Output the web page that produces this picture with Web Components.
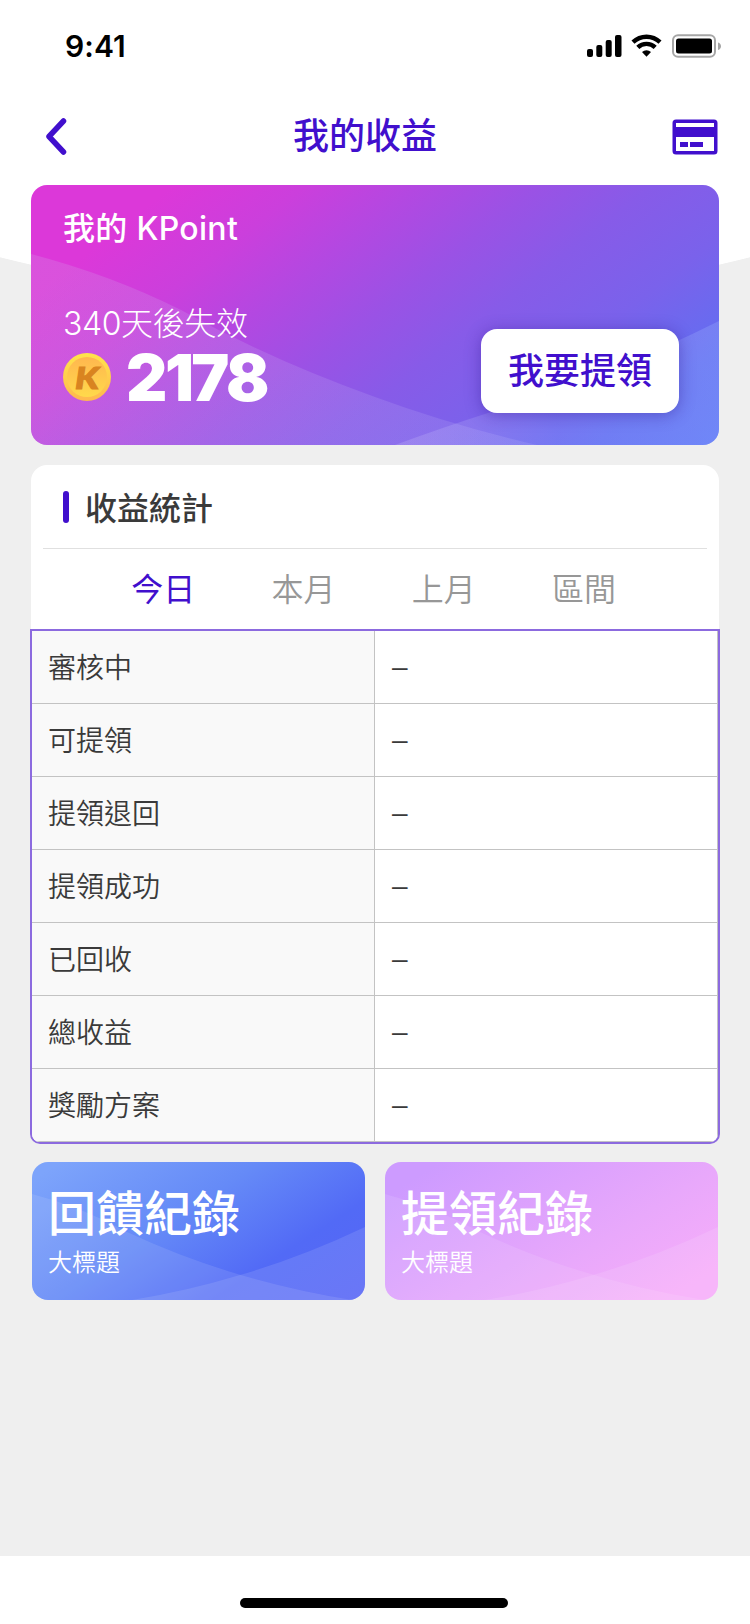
<!DOCTYPE html>
<html lang="zh-Hant">
<head>
<meta charset="utf-8">
<title>我的收益</title>
<style>
  body {
    margin: 0;
    font-family: "Noto Sans CJK TC", sans-serif;
  }
</style>
</head>
<body>
<earnings-page></earnings-page>
<script>
const define = (name, html) => {
  const template = document.createElement('template');
  template.innerHTML = html;
  customElements.define(name, class extends HTMLElement {
    constructor() {
      super();
      this.attachShadow({ mode: 'open' });
      this.shadowRoot.appendChild(template.content.cloneNode(true));
    }
  });
};

define('status-bar', `
  <style>
    :host {
      display: flex;
      justify-content: space-between;
      align-items: center;
      height: 92px;
      padding: 0 28px 0 65px;
      box-sizing: border-box;
      color: #000;
    }
    .time {
      font: 600 30px/40px Inter, sans-serif;
      letter-spacing: .1px;
    }
    svg { display: block; }
  </style>
  <span class="time">9:41</span>
  <svg width="135" height="24" viewBox="0 0 135 24">
    <rect x="0" y="15" width="6" height="8" rx="2"/>
    <rect x="9.3" y="11" width="6" height="12" rx="2"/>
    <rect x="18.7" y="6" width="6" height="17" rx="2"/>
    <rect x="28" y="1" width="6.5" height="22" rx="2"/>
    <g fill="none" stroke="#000" stroke-width="4.4">
      <path d="M46 8.2a19.5 19.5 0 0 1 27 0"/>
      <path d="M50.8 13.4a12.6 12.6 0 0 1 17.4 0"/>
    </g>
    <path d="M55 18a7 7 0 0 1 9 0l-4.500 4.700z"/>
    <rect x="86" y="1.200" width="42" height="21.500" rx="5" fill="none" stroke="#a6a6a6" stroke-width="2"/>
    <rect x="89" y="4.500" width="36" height="15" rx="2.500"/>
    <path d="M131 8.500q3 1 3 3.800t-3 3.800z" fill="#a6a6a6"/>
  </svg>
`);

define('nav-bar', `
  <style>
    :host {
      display: flex;
      justify-content: space-between;
      align-items: center;
      height: 93px;
      padding: 0 32px 4px 45px;
      box-sizing: border-box;
      color: #410fcd;
    }
    h1 {
      margin: 0 33px 7px 0;
      font-size: 36px;
      font-weight: 500;
      line-height: 52px;
    }
    .side { width: 46px; }
    svg { display: block; }
  </style>
  <div class="side">
    <svg width="22" height="38" viewBox="0 0 22 38">
      <path d="M18.500 3L4 18.500L18.500 34" fill="none" stroke="currentColor" stroke-width="5.500" stroke-linecap="round" stroke-linejoin="round"/>
    </svg>
  </div>
  <h1><slot></slot></h1>
  <div class="side">
    <svg width="46" height="36" viewBox="0 0 46 36">
      <path fill="currentColor" fill-rule="evenodd" d="M4 0.500h38a3.500 3.500 0 0 1 3.500 3.500v28a3.500 3.500 0 0 1-3.500 3.500H4A3.500 3.500 0 0 1 .5 32V4A3.500 3.500 0 0 1 4 .500zM4 4v4h38V4zM4 18v14h38V18z"/>
      <path fill="currentColor" d="M8 23h8v5H8zM18 23h13v5H18z"/>
    </svg>
  </div>
`);

define('coin-icon', `
  <style>
    :host { display: block; width: 48px; height: 48px; }
    svg { display: block; }
    text { font: italic 900 30px Lato, sans-serif; }
  </style>
  <svg width="48" height="48" viewBox="0 0 48 48">
    <defs>
      <linearGradient id="rim" x1="0" y1="0" x2="0" y2="1">
        <stop offset="0" stop-color="#ffe54b"/>
        <stop offset="1" stop-color="#ffb74f"/>
      </linearGradient>
      <linearGradient id="face" x1="0" y1="0" x2="0" y2="1">
        <stop offset="0" stop-color="#ffb74f"/>
        <stop offset="1" stop-color="#ffd94b"/>
      </linearGradient>
    </defs>
    <circle cx="24" cy="24" r="24" fill="url(#rim)"/>
    <circle cx="24" cy="24" r="20" fill="url(#face)"/>
    <text x="12" y="35.500" textLength="24" lengthAdjust="spacingAndGlyphs" fill="#d98420" stroke="#d98420">K</text>
  </svg>
`);

define('point-card', `
  <style>
    :host {
      display: grid;
      grid-template-columns: 1fr auto;
      height: 260px;
      box-sizing: border-box;
      padding: 0 40px 0 32px;
      border-radius: 16px;
      overflow: hidden;
      position: relative;
      color: #fff;
      background: linear-gradient(142deg, #dc38d9 14%, #cb3fdc 27%, #b348e1 38%, #9a52e5 50%, #875be8 61%, #7a62eb 74%, #626ef1 88%, #5c74f5);
    }
    /* decorative waves behind the content */
    .waves {
      position: absolute;
      inset: 0;
    }
    .info, .action { position: relative; }
    .title {
      margin-top: 21px;
      font-family: Inter, "Noto Sans CJK TC", sans-serif;
      font-size: 32px;
      line-height: 46px;
      font-weight: 500;
      letter-spacing: .3px;
    }
    .expiry {
      margin-top: 49px;
      font-family: Inter, "Noto Sans CJK TC", sans-serif;
      font-size: 32px;
      line-height: 46px;
      font-weight: 300;
      letter-spacing: -.4px;
    }
    .total {
      display: flex;
      align-items: center;
      gap: 15px;
      margin-top: 6px;
      height: 48px;
    }
    .amount {
      padding-top: 2px;
      font: 900 64px/48px Inter, sans-serif;
      letter-spacing: -2.500px;
    }
    .action {
      align-self: end;
      margin-bottom: 32px;
      width: 198px;
      height: 84px;
      border: 0;
      border-radius: 16px;
      background: #fff;
      box-shadow: 0 2px 16px rgba(50, 20, 140, .42);
      color: #410fcd;
      font: 500 36px/78px "Noto Sans CJK TC", sans-serif;
      padding: 0 0 6px;
    }
  </style>
  <svg class="waves" width="688" height="260" viewBox="0 0 688 260">
    <defs>
      <linearGradient id="right" x1="0" y1="0" x2="1" y2="0">
        <stop offset="0" stop-color="#fff" stop-opacity=".14"/>
        <stop offset=".5" stop-color="#a8b4ff" stop-opacity=".18"/>
        <stop offset="1" stop-color="#a0b8ff" stop-opacity=".28"/>
      </linearGradient>
      <linearGradient id="left" x1="0" y1="0" x2="1" y2="0">
        <stop offset="0" stop-color="#d0c8ec" stop-opacity=".18"/>
        <stop offset="1" stop-color="#d0c8ff" stop-opacity=".15"/>
      </linearGradient>
    </defs>
    <path d="M0 69Q80 90 150 125Q240 175 344 212Q420 240 506 260H0z" fill="url(#left)"/>
    <path d="M688 136Q570 195 460 227Q410 243 364 260H688z" fill="url(#right)"/>
  </svg>
  <div class="info">
    <div class="title"><slot name="title"></slot></div>
    <div class="expiry"><slot name="expiry"></slot></div>
    <div class="total">
      <coin-icon></coin-icon>
      <span class="amount"><slot name="amount"></slot></span>
    </div>
  </div>
  <button class="action"><slot name="action"></slot></button>
`);

define('stats-head', `
  <style>
    :host {
      display: block;
      height: 164px;
      box-sizing: border-box;
      padding: 0 12px;
      border-radius: 16px 16px 0 0;
      background: #fff;
    }
    .heading {
      display: flex;
      align-items: center;
      gap: 16px;
      height: 84px;
      box-sizing: border-box;
      padding-left: 20px;
      border-bottom: 1px solid #e0e0e0;
      color: #3a3a3a;
      font-size: 32px;
      line-height: 46px;
      font-weight: 500;
    }
    .heading span { padding-bottom: 2px; }
    .heading::before {
      content: "";
      width: 6px;
      height: 32px;
      border-radius: 3px;
      background: #410fcd;
    }
    .tabs {
      display: grid;
      grid-template-columns: repeat(4, 140.3px);
      height: 80px;
      box-sizing: border-box;
      padding: 0 0 4px 50px;
      align-items: center;
    }
  </style>
  <div class="heading"><span><slot name="heading"></slot></span></div>
  <div class="tabs"><slot></slot></div>
`);

define('stat-tab', `
  <style>
    :host {
      display: block;
      text-align: center;
      font-size: 32px;
      line-height: 46px;
      font-weight: 350;
      color: #979797;
    }
    :host([active]) {
      color: #410fcd;
      font-weight: 400;
    }
  </style>
  <slot></slot>
`);

define('stats-table', `
  <style>
    :host {
      display: block;
      margin: 0 -1px;
      border: 2px solid #8c6adf;
      border-radius: 0 0 10px 10px;
      overflow: hidden;
      background: #fff;
    }
  </style>
  <slot></slot>
`);

define('stats-row', `
  <style>
    :host {
      display: grid;
      grid-template-columns: 343px 343px;
      height: 73px;
      color: #3a3a3a;
      font-size: 28px;
      line-height: 71px;
    }
    div {
      box-sizing: border-box;
      padding-left: 16px;
      border: solid #c3c3c3;
      border-width: 0 1px 1px 0;
      font-weight: 350;
    }
    .label { background: #f9f9f9; }
    .value {
      padding-left: 17px;
      font-family: "Liberation Sans", sans-serif;
      line-height: 72px;
    }
  </style>
  <div class="label"><slot></slot></div>
  <div class="value"><slot name="value">–</slot></div>
`);

define('record-tile', `
  <style>
    :host {
      display: block;
      position: relative;
      height: 138px;
      box-sizing: border-box;
      padding: 19px 16px 0;
      border-radius: 16px;
      overflow: hidden;
      color: #fff;
      background: linear-gradient(147deg, #7da4fb 5%, #658af7 42%, #526af6 72%, #5866f5 100%);
    }
    :host([kind="withdraw"]) {
      background: linear-gradient(147deg, #cd9bff 10%, #dda2fd 40%, #e8a8fb 62%, #f7adfa 92%);
    }
    svg {
      position: absolute;
      inset: 0;
    }
    b, span {
      display: block;
      position: relative;
    }
    b {
      font-size: 48px;
      line-height: 58px;
      font-weight: 500;
    }
    span {
      margin-top: 6px;
      font-size: 24px;
      line-height: 32px;
      font-weight: 350;
    }
  </style>
  <svg width="333" height="138" viewBox="0 0 333 138" fill="#fff">
    <path fill-opacity=".1" d="M0 32Q50 45 95 70Q200 119 320 138H0z"/>
    <path fill-opacity=".11" d="M333 65Q270 95 208 113Q155 129 100 138H333z"/>
  </svg>
  <b><slot></slot></b>
  <span><slot name="caption"></slot></span>
`);

define('home-indicator', `
  <style>
    :host {
      display: flex;
      justify-content: center;
      height: 68px;
      box-sizing: border-box;
      padding: 42px 2px 0 0;
      background: #fff;
    }
    i {
      width: 268px;
      height: 10px;
      border-radius: 5px;
      background: #000;
    }
  </style>
  <i></i>
`);

define('earnings-page', `
  <style>
    :host {
      display: flex;
      flex-direction: column;
      width: 750px;
      height: 1624px;
      overflow: hidden;
      /* white header that bulges down behind the card */
      background: radial-gradient(circle 1540px at 375px -1236px, #fff 99.950%, #efefef 100%) #efefef;
    }
    main {
      flex: 1;
      padding: 0 31px;
    }
    .stats { margin-top: 20px; }
    .records {
      display: grid;
      grid-template-columns: 1fr 1fr;
      gap: 20px;
      margin: 18px 1px 0;
    }
    header { background: #fff; }
  </style>
  <header>
    <status-bar></status-bar>
    <nav-bar>我的收益</nav-bar>
  </header>
  <main>
    <point-card>
      <span slot="title">我的 KPoint</span>
      <span slot="expiry">340天後失效</span>
      <span slot="amount">2178</span>
      <span slot="action">我要提領</span>
    </point-card>
    <section class="stats">
      <stats-head>
        <span slot="heading">收益統計</span>
        <stat-tab active>今日</stat-tab>
        <stat-tab>本月</stat-tab>
        <stat-tab>上月</stat-tab>
        <stat-tab>區間</stat-tab>
      </stats-head>
      <stats-table>
        <stats-row>審核中</stats-row>
        <stats-row>可提領</stats-row>
        <stats-row>提領退回</stats-row>
        <stats-row>提領成功</stats-row>
        <stats-row>已回收</stats-row>
        <stats-row>總收益</stats-row>
        <stats-row>獎勵方案</stats-row>
      </stats-table>
    </section>
    <section class="records">
      <record-tile>回饋紀錄<span slot="caption">大標題</span></record-tile>
      <record-tile kind="withdraw">提領紀錄<span slot="caption">大標題</span></record-tile>
    </section>
  </main>
  <home-indicator></home-indicator>
`);
</script>
</body>
</html>
